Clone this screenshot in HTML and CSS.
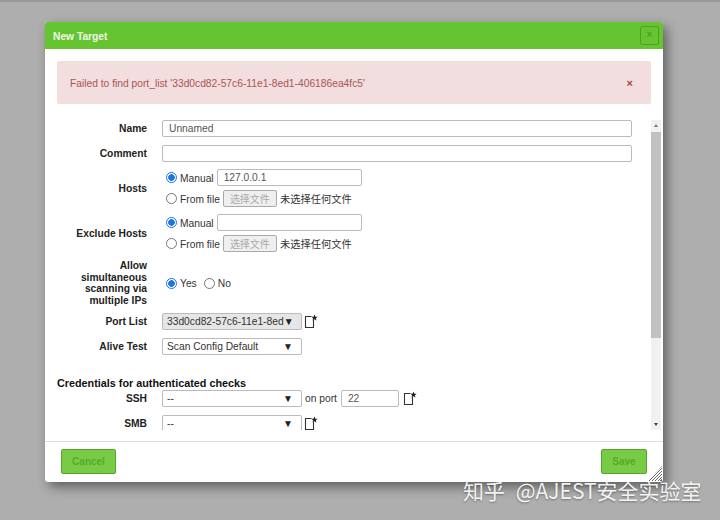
FILE: index.html
```html
<!DOCTYPE html>
<html lang="en">
<head>
  <meta charset="utf-8">
  <title>New Target</title>
  <link rel="stylesheet" href="styles.css">
</head>
<body>
  <div class="page">
    <div class="dialog">
      <div class="titlebar">
        <span class="title">New Target</span>
        <button class="close" type="button">×</button>
      </div>
      <div class="alert">
        <span class="alert-text">Failed to find port_list '33d0cd82-57c6-11e1-8ed1-406186ea4fc5'</span>
        <span class="alert-close">×</span>
      </div>
      <div class="scroller">
        <div class="form">
          <div class="row row-name">
            <label class="label">Name</label>
            <div class="text-input wide">Unnamed</div>
          </div>
          <div class="row row-comment">
            <label class="label">Comment</label>
            <div class="text-input wide"></div>
          </div>
          <div class="row row-hosts">
            <label class="label">Hosts</label>
            <div class="stack">
              <div class="line">
                <span class="radio on"></span><span class="opt">Manual</span>
                <div class="text-input host">127.0.0.1</div>
              </div>
              <div class="line">
                <span class="radio"></span><span class="opt">From file</span>
                <span class="file-btn">选择文件</span><span class="file-none">未选择任何文件</span>
              </div>
            </div>
          </div>
          <div class="row row-hosts">
            <label class="label">Exclude Hosts</label>
            <div class="stack">
              <div class="line">
                <span class="radio on"></span><span class="opt">Manual</span>
                <div class="text-input host"></div>
              </div>
              <div class="line">
                <span class="radio"></span><span class="opt">From file</span>
                <span class="file-btn">选择文件</span><span class="file-none">未选择任何文件</span>
              </div>
            </div>
          </div>
          <div class="row row-allow">
            <label class="label">Allow simultaneous scanning via multiple IPs</label>
            <div class="line">
              <span class="radio on"></span><span class="opt">Yes</span>
              <span class="radio radio-no"></span><span class="opt">No</span>
            </div>
          </div>
          <div class="row row-port">
            <label class="label">Port List</label>
            <div class="line">
              <div class="select grey"><span>33d0cd82-57c6-11e1-8ed</span><span class="arrow">▼</span></div>
              <svg class="new-icon" width="14" height="15" viewBox="0 0 14 15"><path d="M7.5 2.5H1.5V13.5H9.5V6" fill="none" stroke="#333" stroke-width="1.1"/><path d="M10.5 0.5l.9 2.2 2.2.1-1.7 1.4.6 2.2-2-1.2-2 1.2.6-2.2-1.7-1.4 2.2-.1z" fill="#222"/></svg>
            </div>
          </div>
          <div class="row row-alive">
            <label class="label">Alive Test</label>
            <div class="select"><span>Scan Config Default</span><span class="arrow">▼</span></div>
          </div>
          <h4 class="section">Credentials for authenticated checks</h4>
          <div class="row row-ssh">
            <label class="label">SSH</label>
            <div class="line">
              <div class="select"><span>--</span><span class="arrow">▼</span></div>
              <span class="on-port">on port</span>
              <div class="text-input port">22</div>
              <svg class="new-icon" width="14" height="15" viewBox="0 0 14 15"><path d="M7.5 2.5H1.5V13.5H9.5V6" fill="none" stroke="#333" stroke-width="1.1"/><path d="M10.5 0.5l.9 2.2 2.2.1-1.7 1.4.6 2.2-2-1.2-2 1.2.6-2.2-1.7-1.4 2.2-.1z" fill="#222"/></svg>
            </div>
          </div>
          <div class="row row-smb">
            <label class="label">SMB</label>
            <div class="line">
              <div class="select"><span>--</span><span class="arrow">▼</span></div>
              <svg class="new-icon" width="14" height="15" viewBox="0 0 14 15"><path d="M7.5 2.5H1.5V13.5H9.5V6" fill="none" stroke="#333" stroke-width="1.1"/><path d="M10.5 0.5l.9 2.2 2.2.1-1.7 1.4.6 2.2-2-1.2-2 1.2.6-2.2-1.7-1.4 2.2-.1z" fill="#222"/></svg>
            </div>
          </div>
        </div>
        <div class="scrollbar">
          <span class="sb-up"></span>
          <div class="sb-thumb"></div>
          <span class="sb-down"></span>
        </div>
      </div>
      <div class="footer">
        <button class="btn btn-cancel" type="button">Cancel</button>
        <button class="btn btn-save" type="button">Save</button>
      </div>
      <div class="grip"></div>
    </div>
  </div>
  <div class="watermark">知乎 @AJEST安全实验室</div>
</body>
</html>
```

FILE: styles.css
```css
html, body { height: 100%; margin: 0; }
body { background: #aeaeae; font-family: "Liberation Sans", Arial, sans-serif; font-size: 10.25px; color: #333; overflow: hidden; position: relative; }
.page { border-top: 2px solid #999; height: 518px; box-sizing: border-box; padding: 20px 0 0 45px; }
.dialog { background: #fff; width: 618px; height: 460px; border-radius: 3px; box-shadow: 4px 5px 12px rgba(0, 0, 0, .45); position: relative; display: flex; flex-direction: column; }

.titlebar { background: #66c430; height: 27px; border-radius: 3px 3px 0 0; display: flex; align-items: center; justify-content: space-between; padding: 0 4px 0 8px; box-sizing: border-box; flex: none; }
.title { color: #eef8e6; font-weight: bold; padding-top: 1px; }
.close { width: 19px; height: 19px; padding: 0; margin-top: -1px; background: #66c430; border: 1px solid #4f9f26; border-radius: 2px; color: #4f9f26; font-size: 10px; font-weight: bold; line-height: 1; }

.alert { background: #f2dede; color: #ab5553; margin: 12px 12px 0; height: 43px; border-radius: 2px; display: flex; align-items: center; justify-content: space-between; padding: 0 18px 0 13px; flex: none; }
.alert-text { padding-top: 1px; }
.alert-close { font-weight: bold; font-size: 11px; color: #a94442; }

.scroller { display: flex; margin: 16px 2px 0 12px; height: 310px; overflow: hidden; flex: none; }
.form { width: 594px; flex: none; height: 310px; overflow: hidden; }
.row { display: grid; grid-template-columns: 90px 1fr; column-gap: 15px; align-items: center; }
.label { font-weight: bold; text-align: right; line-height: 11.5px; color: #222; padding-top: 1px; }
.row-name { height: 17px; margin-bottom: 8px; }
.row-comment { height: 17px; margin-bottom: 6px; }
.row-hosts { height: 40px; margin-bottom: 5px; }
.row-allow { height: 44px; margin-top: 7px; margin-bottom: 9px; }
.row-allow .label { padding-top: 0; }
.row-port { height: 17px; margin-bottom: 8px; }
.row-alive { height: 17px; margin-bottom: 22px; }
.row-ssh { height: 17px; margin-bottom: 8px; }
.row-smb { height: 17px; }

.text-input { border: 1px solid #bbb; border-radius: 2px; height: 17px; box-sizing: border-box; padding: 0 6px; line-height: 15px; color: #555; background: #fff; }
.wide { width: 470px; }
.host { width: 145px; margin-left: 3px; }
.port { width: 58px; margin-left: 4px; }

.stack { display: flex; flex-direction: column; gap: 4px; }
.line { display: flex; align-items: center; height: 17px; }
.radio { width: 11px; height: 11px; box-sizing: border-box; border: 1px solid #777; border-radius: 50%; background: #fff; margin-left: 4px; flex: none; }
.radio.on { border-color: #1a73e8; background: radial-gradient(circle, #1a73e8 3px, #fff 3.6px); }
.radio-no { margin-left: 7px; }
.opt { margin-left: 3px; padding-top: 1px; }
.file-btn { font-family: "Noto Sans CJK SC", "Liberation Sans", sans-serif; border: 1px solid #aaa; background: #efefef; border-radius: 2px; color: #aaa; font-size: 10px; height: 17px; line-height: 15px; width: 54px; box-sizing: border-box; text-align: center; margin-left: 3px; }
.file-none { font-family: "Noto Sans CJK SC", "Liberation Sans", sans-serif; margin-left: 3px; font-size: 10.25px; }

.select { width: 140px; height: 17px; box-sizing: border-box; border: 1px solid #bbb; border-radius: 2px; background: #fff; padding: 0 8px 0 4px; display: flex; justify-content: space-between; align-items: center; color: #333; white-space: nowrap; overflow: hidden; }
.select.grey { background: #e6e6e6; }
.arrow { font-size: 10px; color: #222; }
.new-icon { margin-left: 4px; flex: none; }
.select + .new-icon { margin-left: 2px; }
.on-port { margin-left: 3px; }

.section { font-size: 10.8px; font-weight: bold; margin: 0; line-height: 13px; color: #111; height: 13px; }

.scrollbar { width: 10px; background: #f1f1f1; position: relative; flex: none; display: flex; flex-direction: column; }
.sb-thumb { background: #c1c1c1; height: 206px; margin-top: 12px; }
.sb-up, .sb-down { position: absolute; left: 2.5px; width: 0; height: 0; border-left: 2.5px solid transparent; border-right: 2.5px solid transparent; }
.sb-up { top: 4px; border-bottom: 3px solid #777; }
.sb-down { bottom: 4px; border-top: 3px solid #444; }

.footer { flex: 1; margin-top: 11px; border-top: 1px solid #ddd; display: flex; justify-content: space-between; align-items: flex-start; padding: 7px 16px 0; }
.btn { height: 25px; box-sizing: border-box; background: #78cc45; border: 1px solid #58a032; border-radius: 2px; color: #55a82f; font-family: "Liberation Sans", sans-serif; font-size: 10px; font-weight: bold; padding: 0; }
.btn-cancel { width: 55px; }
.btn-save { width: 46px; }

.grip { position: absolute; right: 1px; bottom: 1px; width: 14px; height: 15px; background: repeating-linear-gradient(135deg, #fff 0 1px, #666 1px 2px); clip-path: polygon(100% 0, 100% 100%, 0 100%); }

.watermark { position: absolute; left: 463px; top: 475px; font-family: "Noto Sans CJK SC", sans-serif; font-size: 21px; line-height: 30px; word-spacing: 6px; color: rgba(255, 255, 255, .92); text-shadow: 0 1px 2px rgba(0, 0, 0, .35); white-space: nowrap; }
```
